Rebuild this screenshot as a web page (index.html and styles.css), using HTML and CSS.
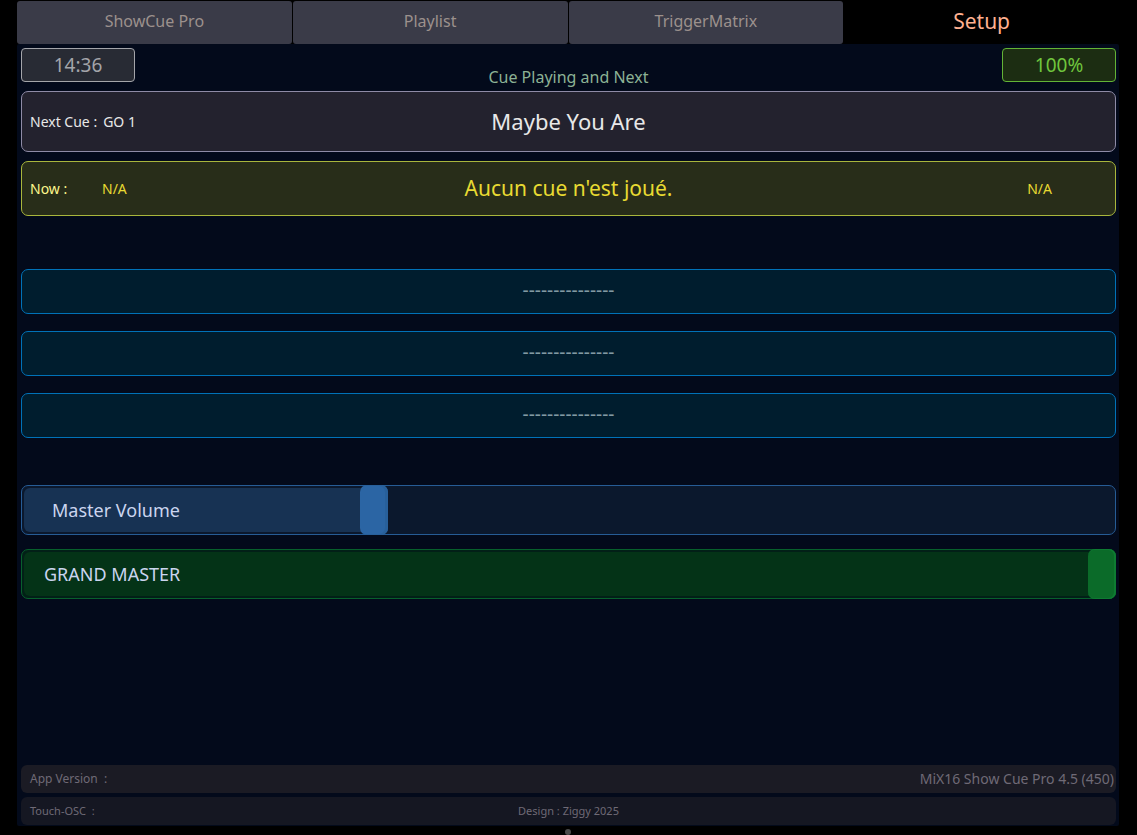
FILE: index.html
```html
<!DOCTYPE html>
<html lang="en">
<head>
<meta charset="utf-8">
<meta name="viewport" content="width=device-width, initial-scale=1">
<title>Show Cue Pro</title>
<link rel="stylesheet" href="styles.css">
</head>
<body>
<div class="app">
  <nav class="tabs">
    <button class="tab" type="button">ShowCue Pro</button>
    <button class="tab" type="button">Playlist</button>
    <button class="tab" type="button">TriggerMatrix</button>
    <button class="tab tab-active" type="button" aria-current="page">Setup</button>
  </nav>
  <main class="panel">
    <header class="top">
      <div class="badge clock">14:36</div>
      <h1 class="title">Cue Playing and Next</h1>
      <div class="badge battery">100%</div>
    </header>
    <section class="cues">
      <div class="cue cue-next">
        <div class="cue-side"><span>Next Cue :</span><span>GO 1</span></div>
        <div class="cue-name">Maybe You Are</div>
      </div>
      <div class="cue cue-now">
        <div class="cue-side"><span class="now-label">Now :</span><span>N/A</span></div>
        <div class="cue-name">Aucun cue n'est joué.</div>
        <div class="cue-end">N/A</div>
      </div>
    </section>
    <section class="slots">
      <div class="slot">---------------</div>
      <div class="slot">---------------</div>
      <div class="slot">---------------</div>
    </section>
    <section class="faders">
      <div class="fader fader-volume" style="--level: 0.318">
        <span class="fill"></span>
        <label class="fader-label" for="volume">Master Volume</label>
        <input class="range" id="volume" type="range" min="0" max="1000" value="318">
      </div>
      <div class="fader fader-grand" style="--level: 1">
        <span class="fill"></span>
        <label class="fader-label" for="grand">GRAND MASTER</label>
        <input class="range" id="grand" type="range" min="0" max="1000" value="1000">
      </div>
    </section>
    <footer class="info">
      <div class="info-row info-app">
        <span>App Version&nbsp; :</span>
        <span class="version">MiX16 Show Cue Pro 4.5 (450)</span>
      </div>
      <div class="info-row info-osc">
        <span>Touch-OSC&nbsp; :</span>
        <span class="design">Design : Ziggy 2025</span>
      </div>
    </footer>
  </main>
  <div class="pager"><span class="dot"></span></div>
</div>
</body>
</html>
```
FILE: styles.css
```css
* {
  box-sizing: border-box;
}

body {
  margin: 0;
  background: #000;
  font-family: "Noto Sans", "Open Sans", sans-serif;
}

.app {
  display: flex;
  flex-direction: column;
  min-height: 100vh;
  padding: 1px 18px 0 17px;
}

.tabs {
  display: grid;
  grid-template-columns: repeat(4, 1fr);
  gap: 1px;
}

.tab {
  height: 43px;
  padding: 0 0 3px;
  border: 0;
  border-radius: 3px;
  background: #3a3b48;
  color: #9c918d;
  font: inherit;
  font-size: 16px;
}

.tab-active {
  background: #000;
  color: #ffb090;
  font-size: 21px;
}

.panel {
  display: flex;
  flex: 1;
  flex-direction: column;
  padding: 4px 3px 1px 4px;
  border-radius: 2px;
  background: #030a1b;
}

.top {
  display: grid;
  grid-template-columns: 1fr auto 1fr;
  height: 43px;
}

.badge {
  width: 114px;
  height: 34px;
  border: 1px solid;
  border-radius: 4px;
  font-size: 19px;
  line-height: 32px;
  text-align: center;
}

.clock {
  border-color: #a4a5aa;
  background: #282b34;
  color: #a3a4a9;
}

.battery {
  justify-self: end;
  border-color: #63b436;
  background: #1c2d12;
  color: #70c63d;
}

.title {
  align-self: end;
  margin: 0;
  color: #8cb295;
  font-size: 16px;
  font-weight: 400;
  line-height: 28px;
}

.cues {
  display: flex;
  flex-direction: column;
  gap: 9px;
}

.cue {
  display: grid;
  grid-template-columns: 1fr auto 1fr;
  align-items: center;
  padding: 0 8px;
  border: 1px solid;
  border-radius: 7px;
  font-size: 14px;
}

.cue-side {
  display: flex;
  gap: 6px;
}

.cue-name {
  padding-bottom: 2px;
}

.cue-next {
  height: 61px;
  border-color: #8e8ba6;
  background: #23222e;
  color: #e8e8e8;
}

.cue-next .cue-name {
  font-size: 22px;
}

.cue-now {
  height: 55px;
  border-color: #a9b63c;
  background: #282d19;
  color: #e8da32;
}

.cue-now .cue-name {
  font-size: 21px;
}

.now-label {
  width: 66px;
  color: #fdf78c;
}

.cue-end {
  justify-self: end;
  padding-right: 55px;
}

.slots {
  display: flex;
  flex-direction: column;
  gap: 17px;
  margin-top: 53px;
}

.slot {
  height: 45px;
  border: 1px solid #0072b8;
  border-radius: 7px;
  background: #001d2e;
  color: #8199a3;
  font-size: 19px;
  line-height: 40px;
  text-align: center;
}

.faders {
  display: flex;
  flex-direction: column;
  gap: 14px;
  margin-top: 47px;
}

.fader {
  --thumb: 28px;
  display: grid;
  height: 50px;
  border: 1px solid;
  border-radius: 7px;
}

.fill,
.fader-label,
.range {
  grid-area: 1 / 1;
}

.fill {
  width: calc(var(--thumb) + (100% - var(--thumb)) * var(--level) - 4px);
  margin: 2px;
  border-radius: 6px;
}

.fader-label {
  align-self: center;
  z-index: 1;
  color: #cbd5ef;
  font-size: 18px;
  pointer-events: none;
}

.range {
  width: calc(100% + 2px);
  height: 50px;
  margin: -1px;
  background: transparent;
  appearance: none;
}

.range::-webkit-slider-thumb {
  width: 28px;
  height: 50px;
  border: 0;
  border-radius: 7px;
  appearance: none;
}

.fader-volume {
  border-color: #265c96;
  background: #0b182d;
}

.fader-volume .fill {
  background: #173253;
}

.fader-volume .fader-label {
  padding-left: 30px;
}

.fader-volume .range::-webkit-slider-thumb {
  background: #2b65a4;
  box-shadow: inset -2px 0 0 1px #28609b;
}

.fader-grand {
  border-color: #07602c;
  background: #022017;
}

.fader-grand .fill {
  background: #043317;
}

.fader-grand .fader-label {
  padding-left: 22px;
}

.fader-grand .range::-webkit-slider-thumb {
  background: #0b6b29;
  box-shadow: inset -1px 0 0 1px #0e7b32;
}

.info {
  display: flex;
  flex-direction: column;
  gap: 4px;
  margin-top: auto;
}

.info-row {
  display: grid;
  grid-template-columns: 1fr auto 1fr;
  align-items: center;
  height: 28px;
  padding: 0 2px 1px 9px;
  border-radius: 6px;
  color: #6f6a76;
}

.info-app {
  background: #1b1b24;
  font-size: 12px;
}

.info-osc {
  background: #151722;
  padding-right: 9px;
  font-size: 11px;
}

.version {
  grid-column: 3;
  justify-self: end;
  font-size: 14px;
}

.pager {
  display: flex;
  justify-content: center;
  height: 9px;
  padding-top: 3px;
}

.dot {
  width: 6px;
  height: 6px;
  border-radius: 50%;
  background: #4b4b4b;
}
```
